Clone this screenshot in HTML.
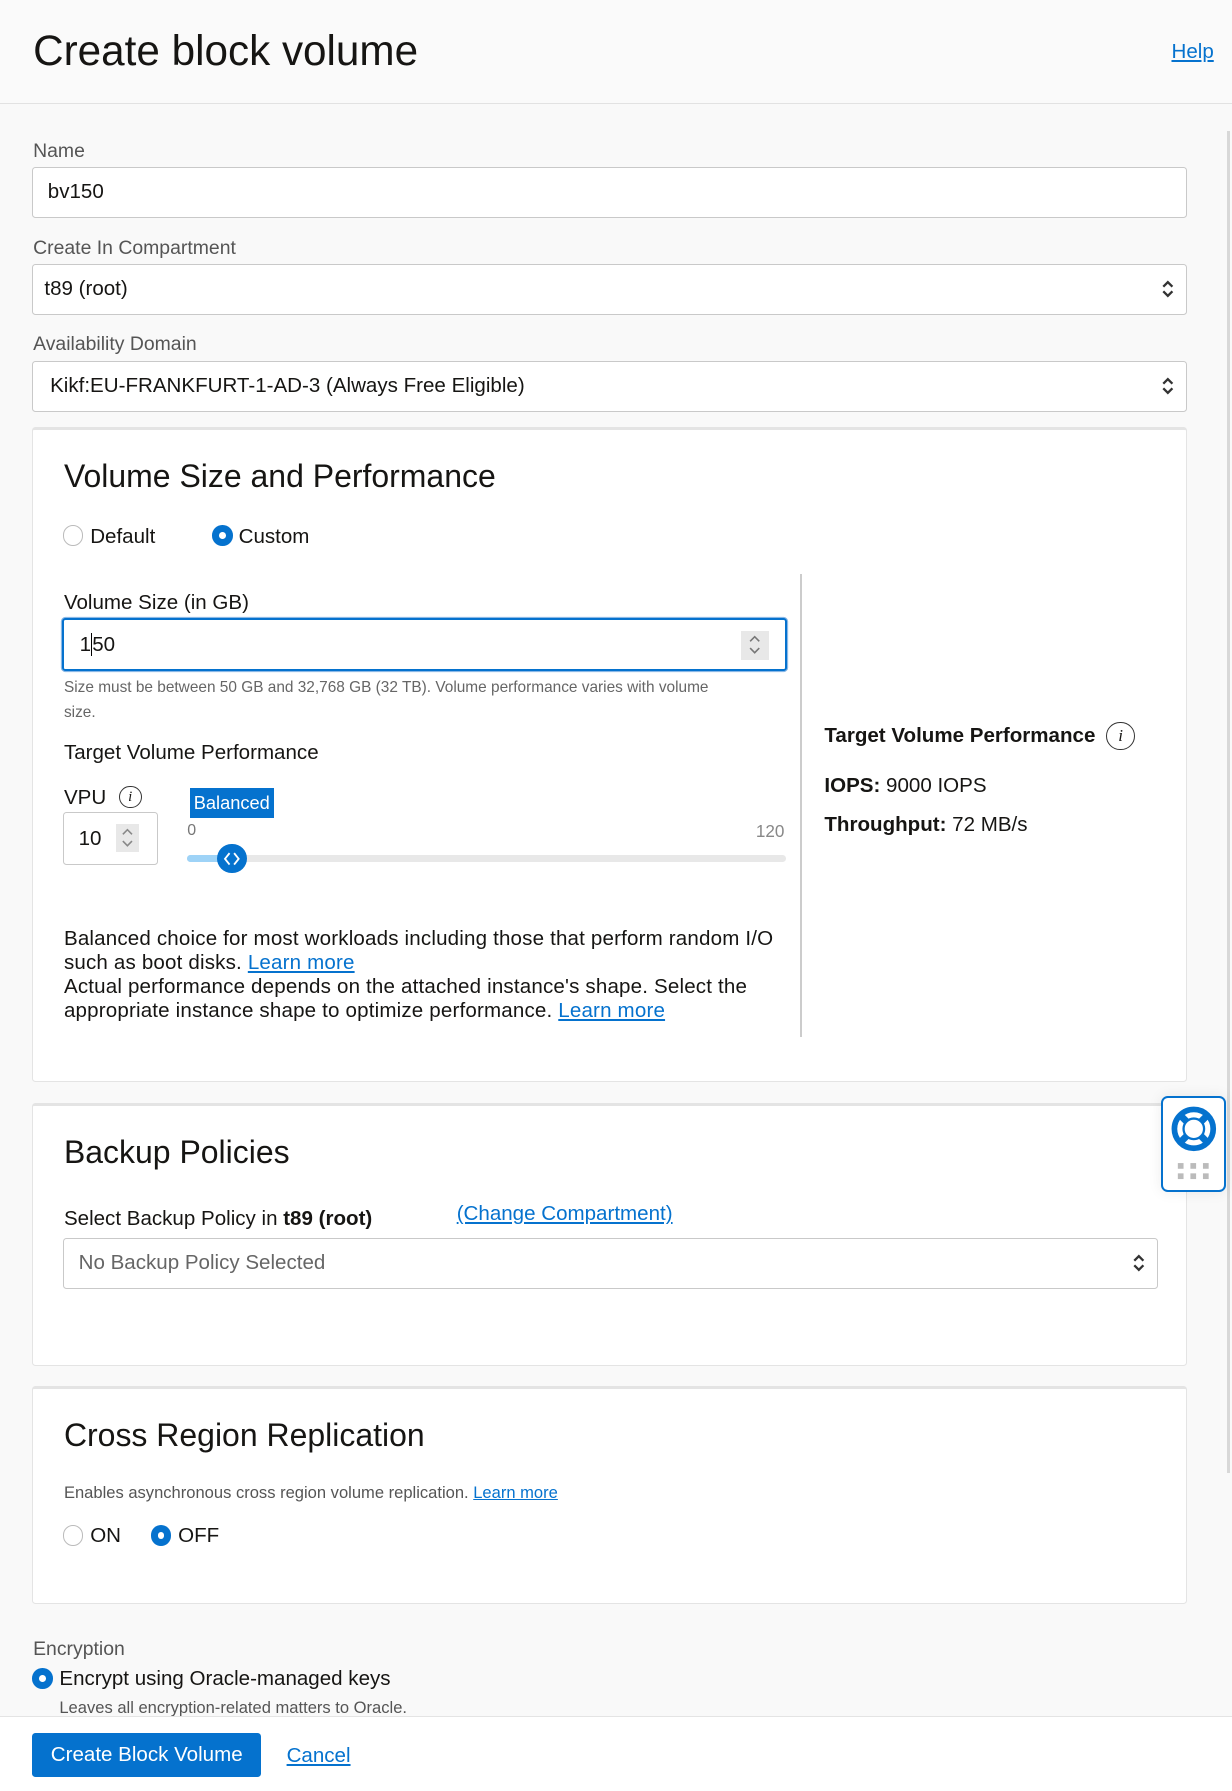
<!DOCTYPE html>
<html><head><meta charset="utf-8"><style>
*{box-sizing:border-box;margin:0;padding:0}
html,body{width:1232px;height:1791px;overflow:hidden;background:#fafafa}
#w{zoom:1.1418;width:1079px;height:1569px;position:relative;font-family:"Liberation Sans",sans-serif;color:#161513;background:#f9f9f9}
.a{position:absolute;white-space:nowrap}
.lbl{font-size:17px;color:#555}
.inp{position:absolute;background:#fff;border:1px solid #c9c9c9;border-radius:3px;font-size:18px;padding-left:13px;display:flex;align-items:center}
.pan{position:absolute;left:28px;width:1012px;background:#fff;border:1px solid #e4e4e4;border-top:3px solid #e4e4e4;border-radius:3px}
.h2{font-size:28px;color:#161513}
a,.lk{color:#0572ce;text-decoration:underline}
.rad{position:absolute;width:18px;height:18px;border-radius:50%;border:1px solid #bbb;background:#fff}
.rad.on{border:none;background:#0572ce}
.rad.on:after{content:"";position:absolute;left:6px;top:6px;width:6px;height:6px;border-radius:50%;background:#fff}
.chev{position:absolute;right:10px;top:50%;transform:translateY(-50%)}
</style></head><body><div id="w">
<div class="a" style="left:0;top:0;width:1079px;height:91px;background:#fafafa;border-bottom:1px solid #e2e2e2"></div>
<div class="a" style="left:29px;top:24px;font-size:37px">Create block volume</div>
<div class="a lk" style="left:1026px;top:35px;font-size:18px">Help</div>
<div class="a" style="left:1075px;top:115px;width:2px;height:1175px;background:#d8d8d8"></div>

<div class="a lbl" style="left:29px;top:123px">Name</div>
<div class="inp" style="left:28px;top:146px;width:1012px;height:45px">bv150</div>
<div class="a lbl" style="left:29px;top:208px">Create In Compartment</div>
<div class="inp" style="left:28px;top:231px;width:1012px;height:45px;padding-left:10px">t89 (root)<svg class="chev" width="12" height="20" viewBox="0 0 12 20"><path d="M2 8l4-4 4 4M2 12l4 4 4-4" stroke="#333" stroke-width="2" fill="none"/></svg></div>
<div class="a lbl" style="left:29px;top:292px">Availability Domain</div>
<div class="inp" style="left:28px;top:316px;width:1012px;height:45px;padding-left:15px">Kikf:EU-FRANKFURT-1-AD-3 (Always Free Eligible)<svg class="chev" width="12" height="20" viewBox="0 0 12 20"><path d="M2 8l4-4 4 4M2 12l4 4 4-4" stroke="#333" stroke-width="2" fill="none"/></svg></div>

<div class="pan" style="top:374px;height:574px"></div>
<div class="a h2" style="left:56px;top:401px">Volume Size and Performance</div>
<div class="rad" style="left:55px;top:460px"></div><div class="a" style="left:79px;top:460px;font-size:18px">Default</div>
<div class="rad on" style="left:186px;top:460px"></div><div class="a" style="left:209px;top:460px;font-size:18px">Custom</div>
<div class="a" style="left:701px;top:503px;width:1px;height:405px;background:#ccc"></div>
<div class="a" style="left:56px;top:518px;font-size:18px">Volume Size (in GB)</div>
<div class="inp" style="left:54px;top:541px;width:635px;height:47px;border:2px solid #0572ce;box-shadow:0 0 0 1px #8ab8e6;padding-left:14px">1<span style="display:inline-block;width:1px;height:20px;background:#000"></span>50<div style="position:absolute;right:14px;top:10px;width:24px;height:25px;background:#e8e8e8"><svg width="24" height="25" viewBox="0 0 24 25"><path d="M8 9l4-4 4 4M8 15l4 4 4-4" stroke="#777" stroke-width="1.4" fill="none"/></svg></div></div>
<div class="a" style="left:56px;top:591px;font-size:13.5px;color:#666;line-height:22px;white-space:normal;width:585px">Size must be between 50 GB and 32,768 GB (32 TB). Volume performance varies with volume size.</div>
<div class="a" style="left:56px;top:649px;font-size:18px">Target Volume Performance</div>
<div class="a" style="left:56px;top:688px;font-size:18px">VPU</div>
<div class="a" style="left:104px;top:688px;width:20px;height:20px;border:1.5px solid #333;border-radius:50%;font:italic 13px 'Liberation Serif',serif;text-align:center;line-height:18px">i</div>
<div class="inp" style="left:55px;top:711px;width:83px;height:47px">10<div style="position:absolute;left:46px;top:10px;width:20px;height:24px;background:#e8e8e8"><svg width="20" height="24" viewBox="0 0 20 24"><path d="M6 9l4-4 4 4M6 15l4 4 4-4" stroke="#888" stroke-width="1.4" fill="none"/></svg></div></div>
<div class="a" style="left:166px;top:690px;width:74px;height:26px;background:#0572ce;color:#fff;font-size:16px;line-height:26px;text-align:center">Balanced</div>
<div class="a" style="left:164px;top:720px;font-size:14px;color:#777">0</div>
<div class="a" style="left:662px;top:720px;font-size:15px;color:#888">120</div>
<div class="a" style="left:164px;top:749px;width:524px;height:6px;border-radius:3px;background:#e8e8e8"></div>
<div class="a" style="left:164px;top:749px;width:40px;height:6px;border-radius:3px;background:#9ed3f7"></div>
<div class="a" style="left:190px;top:739px;width:26px;height:26px;border-radius:50%;background:#0572ce"><svg width="26" height="26" viewBox="0 0 26 26"><path d="M11 8l-4 5 4 5M15 8l4 5-4 5" stroke="#fff" stroke-width="1.6" fill="none"/></svg></div>
<div class="a" style="left:56px;top:812px;font-size:18px;line-height:21px;white-space:normal;width:640px;letter-spacing:0.15px">Balanced choice for most workloads including those that perform random I/O such as boot disks. <span class="lk">Learn more</span><br>Actual performance depends on the attached instance's shape. Select the appropriate instance shape to optimize performance. <span class="lk">Learn more</span></div>
<div class="a" style="left:722px;top:634px;font-size:18px;font-weight:bold">Target Volume Performance</div>
<div class="a" style="left:969px;top:632px;width:25px;height:25px;border:1.5px solid #333;border-radius:50%;font:italic 15px 'Liberation Serif',serif;text-align:center;line-height:22px">i</div>
<div class="a" style="left:722px;top:678px;font-size:18px"><b>IOPS:</b> 9000 IOPS</div>
<div class="a" style="left:722px;top:712px;font-size:18px"><b>Throughput:</b> 72 MB/s</div>

<div class="pan" style="top:966px;height:230px"></div>
<div class="a h2" style="left:56px;top:993px">Backup Policies</div>
<div class="a" style="left:56px;top:1057px;font-size:18px">Select Backup Policy in <b>t89 (root)</b></div>
<div class="a lk" style="left:400px;top:1053px;font-size:18px">(Change Compartment)</div>
<div class="inp" style="left:55px;top:1084px;width:959px;height:45px;color:#666">No Backup Policy Selected<svg class="chev" width="12" height="20" viewBox="0 0 12 20"><path d="M2 8l4-4 4 4M2 12l4 4 4-4" stroke="#333" stroke-width="2" fill="none"/></svg></div>

<div class="pan" style="top:1214px;height:191px"></div>
<div class="a h2" style="left:56px;top:1241px">Cross Region Replication</div>
<div class="a" style="left:56px;top:1299px;font-size:14.5px;color:#555">Enables asynchronous cross region volume replication. <span class="lk">Learn more</span></div>
<div class="rad" style="left:55px;top:1336px"></div><div class="a" style="left:79px;top:1335px;font-size:18px">ON</div>
<div class="rad on" style="left:132px;top:1336px"></div><div class="a" style="left:156px;top:1335px;font-size:18px">OFF</div>

<div class="a lbl" style="left:29px;top:1435px">Encryption</div>
<div class="rad on" style="left:28px;top:1461px"></div><div class="a" style="left:52px;top:1460px;font-size:18px">Encrypt using Oracle-managed keys</div>
<div class="a" style="left:52px;top:1487px;font-size:14.5px;color:#555">Leaves all encryption-related matters to Oracle.</div>

<div class="a" style="left:0;top:1503px;width:1079px;height:66px;background:#fff;border-top:1px solid #e4e4e4"></div>
<div class="a" style="left:28px;top:1518px;width:201px;height:38px;background:#0572ce;border-radius:3px;color:#fff;font-size:18px;line-height:38px;text-align:center">Create Block Volume</div>
<div class="a lk" style="left:251px;top:1527px;font-size:18px">Cancel</div>

<div class="a" style="left:1017px;top:960px;width:57px;height:84px;background:#fff;border:2px solid #0572ce;border-radius:6px;box-shadow:0 0 12px rgba(0,0,0,.08)">
<svg width="53" height="80" viewBox="0 0 53 80"><circle cx="27" cy="27" r="17" fill="none" stroke="#0572ce" stroke-width="5"/><circle cx="27" cy="27" r="9" fill="none" stroke="#0572ce" stroke-width="2"/><path d="M15 15l6 6M39 15l-6 6M15 39l6-6M39 39l-6-6" stroke="#0572ce" stroke-width="6"/>
<g fill="#bbb"><rect x="13" y="57" width="5" height="5"/><rect x="24" y="57" width="5" height="5"/><rect x="35" y="57" width="5" height="5"/><rect x="13" y="66" width="5" height="5"/><rect x="24" y="66" width="5" height="5"/><rect x="35" y="66" width="5" height="5"/></g></svg></div>
</div></body></html>
